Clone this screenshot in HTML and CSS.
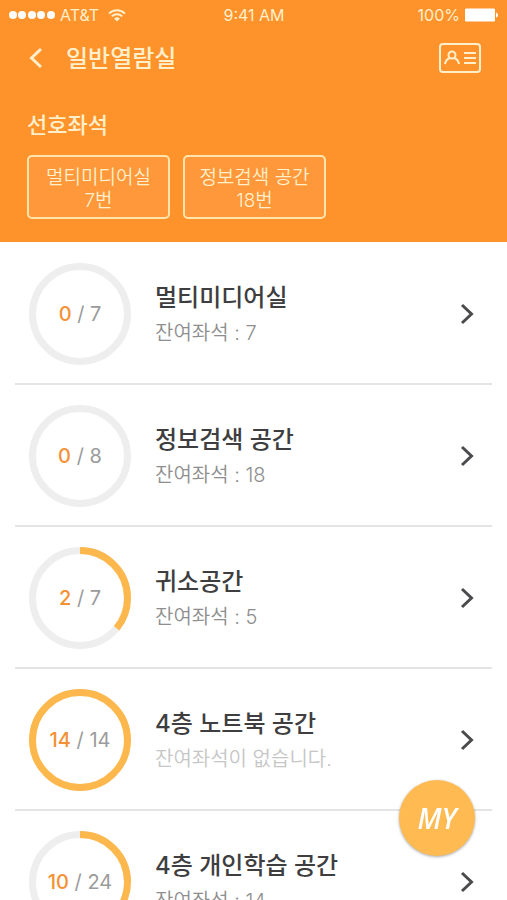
FILE: index.html
```html
<!DOCTYPE html>
<html lang="ko">
<head>
<meta charset="utf-8">
<meta name="viewport" content="width=device-width, initial-scale=1">
<title>일반열람실</title>
<link rel="stylesheet" href="styles.css">
</head>
<body>
<header class="header">
  <div class="status">
    <div class="status-side">
      <svg class="signal" viewBox="0 0 46 10" aria-hidden="true"><circle cx="4" cy="5" r="4"/><circle cx="13" cy="5" r="4"/><circle cx="23" cy="5" r="4"/><circle cx="32" cy="5" r="4"/><circle cx="42" cy="5" r="4"/></svg>
      <span class="carrier">AT&amp;T</span>
      <svg class="wifi" viewBox="0 0 18 13" aria-hidden="true"><path d="M1 4.600a11.500 11.500 0 0 1 16 0M3.800 7.400a7.500 7.500 0 0 1 10.400 0"/><path class="solid" d="M6 9.600a4.300 4.300 0 0 1 6 0L9 12.500z"/></svg>
    </div>
    <span>9:41 AM</span>
    <div class="status-side status-end">
      <span>100%</span>
      <svg class="battery" viewBox="0 0 34 14" aria-hidden="true"><rect width="30" height="13" y=".5" rx="1"/><path d="M31 4.500q2 .5 2 2.500t-2 2.500z"/></svg>
    </div>
  </div>
  <nav class="bar">
    <button class="icon-button" type="button" aria-label="뒤로"><svg class="back" viewBox="0 0 14 22"><path d="M12 2 2.500 11 12 20"/></svg></button>
    <h1 class="title">일반열람실</h1>
    <button class="icon-button" type="button" aria-label="이용증"><svg class="card" viewBox="0 0 42 30"><rect x="1" y="1" width="40" height="28" rx="3"/><circle cx="13" cy="12" r="3.500"/><path d="M6 21q1-5 5-6M15 15q4 1 5 6M25 10h12M25 15h12M25 20h12"/></svg></button>
  </nav>
  <section class="favorites">
    <h2 class="favorites-title">선호좌석</h2>
    <div class="seats">
      <button class="seat" type="button"><span class="seat-line">멀티미디어실</span><span class="seat-line">7번</span></button>
      <button class="seat" type="button"><span class="seat-line">정보검색 공간</span><span class="seat-line">18번</span></button>
    </div>
  </section>
</header>
<main class="rooms">
  <a class="room" href="#multimedia">
    <span class="gauge"><svg class="ring" viewBox="0 0 102 102" aria-hidden="true"><circle class="track" cx="51" cy="51" r="47.500"/></svg><span class="count"><b class="used">0</b> / 7</span></span>
    <span class="info"><strong class="name">멀티미디어실</strong><span class="left">잔여좌석 : 7</span></span>
    <svg class="chevron" viewBox="0 0 14 22" aria-hidden="true"><path d="M2 2 11.500 11 2 20"/></svg>
  </a>
  <a class="room" href="#search">
    <span class="gauge"><svg class="ring" viewBox="0 0 102 102" aria-hidden="true"><circle class="track" cx="51" cy="51" r="47.500"/></svg><span class="count"><b class="used">0</b> / 8</span></span>
    <span class="info"><strong class="name">정보검색 공간</strong><span class="left">잔여좌석 : 18</span></span>
    <svg class="chevron" viewBox="0 0 14 22" aria-hidden="true"><path d="M2 2 11.500 11 2 20"/></svg>
  </a>
  <a class="room" href="#guiso">
    <span class="gauge"><svg class="ring" viewBox="0 0 102 102" aria-hidden="true"><circle class="track" cx="51" cy="51" r="47.500"/><circle class="fill" cx="51" cy="51" r="47.500" pathLength="100" stroke-dasharray="36 100"/></svg><span class="count"><b class="used">2</b> / 7</span></span>
    <span class="info"><strong class="name">귀소공간</strong><span class="left">잔여좌석 : 5</span></span>
    <svg class="chevron" viewBox="0 0 14 22" aria-hidden="true"><path d="M2 2 11.500 11 2 20"/></svg>
  </a>
  <a class="room" href="#notebook">
    <span class="gauge"><svg class="ring" viewBox="0 0 102 102" aria-hidden="true"><circle class="fill" cx="51" cy="51" r="47.500"/></svg><span class="count"><b class="used">14</b> / 14</span></span>
    <span class="info"><strong class="name">4층 노트북 공간</strong><span class="left none">잔여좌석이 없습니다.</span></span>
    <svg class="chevron" viewBox="0 0 14 22" aria-hidden="true"><path d="M2 2 11.500 11 2 20"/></svg>
  </a>
  <a class="room" href="#study">
    <span class="gauge"><svg class="ring" viewBox="0 0 102 102" aria-hidden="true"><circle class="track" cx="51" cy="51" r="47.500"/><circle class="fill" cx="51" cy="51" r="47.500" pathLength="100" stroke-dasharray="42 100"/></svg><span class="count"><b class="used">10</b> / 24</span></span>
    <span class="info"><strong class="name">4층 개인학습 공간</strong><span class="left">잔여좌석 : 14</span></span>
    <svg class="chevron" viewBox="0 0 14 22" aria-hidden="true"><path d="M2 2 11.500 11 2 20"/></svg>
  </a>
</main>
<button class="my" type="button">MY</button>
</body>
</html>
```
FILE: styles.css
```css
* { box-sizing: border-box; }

body {
  margin: 0;
  height: 100vh;
  display: flex;
  flex-direction: column;
  background: #fff;
  color: #3e3e40;
  font-family: Inter, "Noto Sans CJK KR", sans-serif;
}

button {
  margin: 0;
  padding: 0;
  border: 0;
  background: none;
  color: inherit;
  font: inherit;
}

svg { display: block; flex: none; }

.header {
  flex: none;
  padding-bottom: 23px;
  background: #ff932b;
  color: #ffefcb;
}

.status {
  display: grid;
  grid-template-columns: 1fr auto 1fr;
  align-items: center;
  height: 30px;
  padding: 0 8px 0 9px;
  font-size: 16px;
  line-height: 20px;
}

.status-side { display: flex; align-items: center; gap: 5px; }
.status-end { justify-content: flex-end; }
.signal { width: 46px; height: 10px; fill: #fff; }
.wifi { width: 18px; height: 13px; margin-left: 4px; fill: none; stroke: #ffefcb; stroke-width: 2; }
.wifi .solid { fill: #ffefcb; stroke: none; }
.battery { width: 34px; height: 14px; fill: #fff; }

.bar {
  display: flex;
  align-items: center;
  height: 55px;
  padding: 0 26px 0 29px;
}

.back, .card { fill: none; stroke: #ffefcb; stroke-width: 2; }
.back { width: 14px; height: 22px; stroke-width: 3; }
.card { width: 42px; height: 30px; }

.title {
  flex: 1;
  margin: 0 0 0 23px;
  padding-top: 2px;
  font-size: 24px;
  font-weight: 500;
  line-height: 32px;
}

.favorites { padding: 25px 27px 0; }

.favorites-title {
  margin: 0 0 15px;
  font-size: 22px;
  font-weight: 500;
  line-height: 30px;
}

.seats { display: flex; gap: 13px; }

.seat {
  width: 143px;
  padding: 9px 0 5px;
  border: 2px solid #ffe5ac;
  border-radius: 5px;
  background: #ff983a;
  font-size: 19px;
  font-weight: 350;
  line-height: 23px;
  white-space: nowrap;
}

.seat-line { display: block; }

.rooms {
  flex: 1;
  min-height: 0;
  padding: 1px 15px 0;
  overflow-y: auto;
  scrollbar-width: none;
}

.room {
  display: flex;
  align-items: center;
  height: 142px;
  padding: 2px 18px 0 14px;
  border-bottom: 2px solid #e4e4e4;
  color: inherit;
  text-decoration: none;
}

.gauge { display: grid; place-items: center; flex: none; }
.gauge > * { grid-area: 1 / 1; }
.ring { width: 102px; height: 102px; transform: rotate(-90deg); }
.ring circle { fill: none; stroke-width: 7; }
.ring .track { stroke: #eee; }
.ring .fill { stroke: #fdb84d; }

.count {
  color: #9b9b9b;
  font-size: 20px;
  font-weight: 400;
  line-height: 24px;
}

.used { color: #f59135; font-weight: 500; }

.info {
  display: grid;
  flex: 1;
  min-width: 0;
  padding: 2px 0 0 24px;
  white-space: nowrap;
}

.name { font-size: 24px; font-weight: 500; line-height: 36px; }

.left {
  color: #8e8e8e;
  font-size: 20px;
  font-weight: 350;
  line-height: 34px;
}

.left.none { color: #c6c6c6; }

.chevron {
  width: 14px;
  height: 22px;
  fill: none;
  stroke: #4b4b4d;
  stroke-width: 3;
}

.my {
  position: fixed;
  right: 32px;
  bottom: 44px;
  width: 76px;
  height: 76px;
  border-radius: 50%;
  background: #ffbb51;
  box-shadow: 0 1px 3px rgba(0, 0, 0, 0.35);
  color: #fff;
  font: italic 600 28px/76px "Open Sans", sans-serif;
}
```
